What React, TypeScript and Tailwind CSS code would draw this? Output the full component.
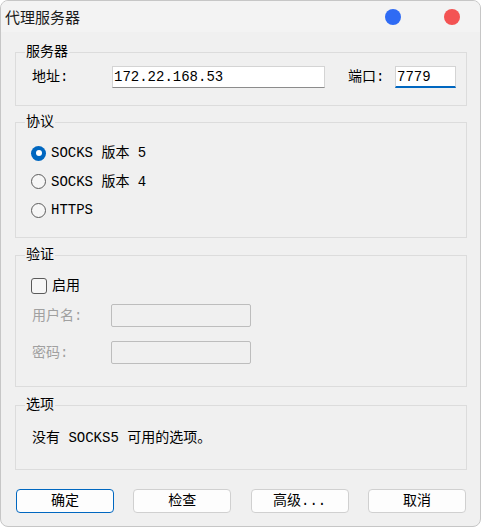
import React from 'react'

const MONO = { fontFamily: '"Liberation Mono", "Noto Sans CJK SC", monospace' }

function Group({ title, className, children }: { title: string; className: string; children: React.ReactNode }) {
  return (
    <div className={`relative w-[452px] border border-[#dcdcdc] ${className}`}>
      <span className="absolute -top-[10px] left-[9px] bg-[#f0f0f0] px-[1px] text-[14px] leading-[18px] text-black">
        {title}
      </span>
      {children}
    </div>
  )
}

function Radio({ checked, label }: { checked?: boolean; label: string }) {
  return (
    <div className="flex h-[28.5px] items-center pl-[15px]">
      {checked ? (
        <span className="flex h-[15px] w-[15px] items-center justify-center rounded-full bg-[#0067c0]">
          <span className="h-[6px] w-[6px] rounded-full bg-white" />
        </span>
      ) : (
        <span className="h-[15px] w-[15px] rounded-full border border-[#5c5c5c] bg-[#f6f6f6]" />
      )}
      <span className="ml-[5px] whitespace-pre text-[14px] leading-[18px]">{label}</span>
    </div>
  )
}

function Button({ label, primary }: { label: string; primary?: boolean }) {
  return (
    <button
      className={`h-[24px] w-[98px] rounded-[4px] border bg-[#fdfdfd] text-[14px] leading-[18px] text-black ${
        primary ? 'border-[#0067c0]' : 'border-[#d0d0d0]'
      }`}
    >
      {label}
    </button>
  )
}

export default function App() {
  return (
    <div className="h-[528px] w-[482px] bg-white" style={MONO}>
      <div className="flex h-[527px] w-[481px] flex-col overflow-hidden rounded-lg border border-[#c6c6c6] bg-[#f0f0f0] text-black">
        {/* Title bar */}
        <div className="flex h-[31px] shrink-0 items-center bg-[#f3f3f3] pl-[4px]">
          <span
            className="text-[15px] leading-[20px] text-[#1b1b1b]"
            style={{ fontFamily: '"Noto Sans CJK SC", sans-serif' }}
          >
            代理服务器
          </span>
          <span className="ml-auto h-[16px] w-[16px] rounded-full bg-[#2f6bf4]" />
          <span className="ml-[43px] mr-[20px] h-[16px] w-[16px] rounded-full bg-[#f35353]" />
        </div>

        <div className="flex flex-col pl-[14px]">
          {/* 服务器 */}
          <Group title="服务器" className="mt-[20px] h-[54px] pt-[13px]">
            <div className="flex items-center pl-[16px]">
              <span className="w-[80px] text-[14px] leading-[18px]">地址:</span>
              <div className="flex h-[22px] w-[213px] items-center border border-[#d4d4d4] border-b-[#8c8c8c] bg-white pl-[1px] text-[14px] leading-[18px]">
                172.22.168.53
              </div>
              <span className="ml-[23px] w-[47px] text-[14px] leading-[18px]">端口:</span>
              <div className="flex h-[22px] w-[61px] items-center border border-[#d4d4d4] border-b-2 border-b-[#0067c0] bg-white pl-[1px] text-[14px] leading-[18px]">
                7779
              </div>
            </div>
          </Group>

          {/* 协议 */}
          <Group title="协议" className="mt-[16px] h-[116px] pt-[16px]">
            <Radio checked label="SOCKS 版本 5" />
            <Radio label="SOCKS 版本 4" />
            <Radio label="HTTPS" />
          </Group>

          {/* 验证 */}
          <Group title="验证" className="mt-[17px] h-[132px] pt-[18px]">
            <div className="flex h-[24px] items-center pl-[15px]">
              <span className="h-[16px] w-[16px] rounded-[3px] border border-[#5a5a5a] bg-[#f6f6f6]" />
              <span className="ml-[5px] text-[14px] leading-[18px]">启用</span>
            </div>
            <div className="mt-[6px] flex items-center pl-[16px]">
              <span className="w-[79px] text-[14px] leading-[18px] text-[#a0a0a0]">用户名:</span>
              <div className="h-[23px] w-[140px] rounded-[2px] border border-[#bdbdbd] bg-[#f0f0f0]" />
            </div>
            <div className="mt-[14px] flex items-center pl-[16px]">
              <span className="w-[79px] text-[14px] leading-[18px] text-[#a0a0a0]">密码:</span>
              <div className="h-[23px] w-[140px] rounded-[2px] border border-[#bdbdbd] bg-[#f0f0f0]" />
            </div>
          </Group>

          {/* 选项 */}
          <Group title="选项" className="mt-[18px] h-[65px] pt-[23px]">
            <div className="whitespace-pre pl-[16px] text-[14px] leading-[18px]">没有 SOCKS5 可用的选项。</div>
          </Group>

          {/* Buttons */}
          <div className="mt-[19px] flex w-[451px] justify-between pl-[1px]">
            <Button label="确定" primary />
            <Button label="检查" />
            <Button label="高级..." />
            <Button label="取消" />
          </div>
        </div>
      </div>
    </div>
  )
}
